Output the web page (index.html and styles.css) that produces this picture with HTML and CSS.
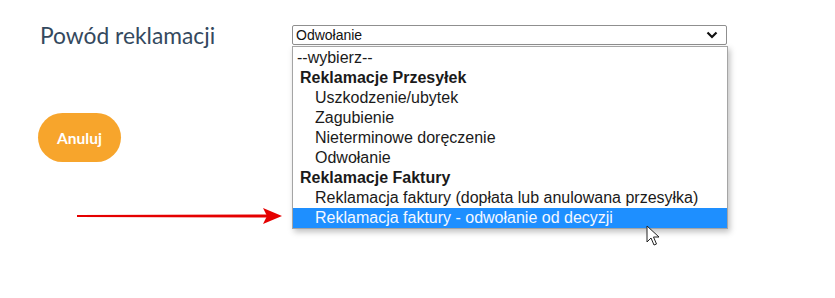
FILE: index.html
```html
<!DOCTYPE html>
<html lang="pl">
<head>
    <meta charset="UTF-8">
    <title>Powód reklamacji</title>
    <link rel="stylesheet" href="styles.css">
</head>
<body>
    <div class="page">
        <div class="form-row">
            <label class="label">Powód reklamacji</label>
            <div class="select-wrap">
                <div class="select">
                    <span>Odwołanie</span>
                    <svg class="chevron" width="12" height="8" viewBox="0 0 12 8">
                        <path d="M1.5 1.5 L6 6 L10.5 1.5" fill="none" stroke="#111" stroke-width="2.2"/>
                    </svg>
                </div>
                <ul class="dropdown">
                    <li class="opt top">--wybierz--</li>
                    <li class="group">Reklamacje Przesyłek</li>
                    <li class="opt">Uszkodzenie/ubytek</li>
                    <li class="opt">Zagubienie</li>
                    <li class="opt">Nieterminowe doręczenie</li>
                    <li class="opt">Odwołanie</li>
                    <li class="group">Reklamacje Faktury</li>
                    <li class="opt">Reklamacja faktury (dopłata lub anulowana przesyłka)</li>
                    <li class="opt active">Reklamacja faktury - odwołanie od decyzji</li>
                </ul>
            </div>
        </div>

        <div class="actions">
            <button class="btn">Anuluj</button>
            <button class="btn">Dalej</button>
        </div>
    </div>

    <svg class="arrow" width="210" height="18" viewBox="0 0 210 18">
        <path d="M0 8 L190 7.5 L190 10.5 L0 10 Z" fill="#e50000"/>
        <path d="M186 1 L205 9 L186 17 L190 9 Z" fill="#e50000"/>
    </svg>

    <svg class="cursor" width="16" height="22" viewBox="0 0 16 22">
        <path d="M1 1 L1 17 L5 13 L8 20 L10.5 19 L7.5 12 L13 12 Z" fill="#fff" stroke="#222" stroke-width="1"/>
    </svg>
</body>
</html>
```

FILE: styles.css
```css
html, body {
    margin: 0;
    height: 100%;
    background: #fff;
    font-family: "Liberation Sans", Arial, sans-serif;
}

.page {
    min-height: 100%;
    box-sizing: border-box;
    padding: 25px 0 0 38px;
}

.form-row {
    display: flex;
    align-items: center;
    height: 20px;
}

.label {
    width: 254px;
    padding-left: 2px;
    box-sizing: border-box;
    font-family: Lato, sans-serif;
    font-size: 22.8px;
    color: #34495e;
}

.select-wrap {
    position: relative;
    width: 435px;
}

.select {
    display: flex;
    align-items: center;
    justify-content: space-between;
    height: 20px;
    box-sizing: border-box;
    padding: 0 8px 0 3px;
    border: 1px solid #8f8f8f;
    border-radius: 2px;
    font-size: 14px;
    color: #111;
}

.dropdown {
    position: absolute;
    top: 21px;
    left: 0;
    z-index: 5;
    width: 434px;
    margin: 0;
    padding: 1px 0 0;
    list-style: none;
    background: #fff;
    border: 1px solid #a5a5a5;
    box-shadow: 2px 3px 6px rgba(0, 0, 0, 0.25);
    font-size: 16px;
    color: #1a1a1a;
}

.dropdown li {
    height: 20px;
    line-height: 20px;
    white-space: nowrap;
}

.opt {
    padding-left: 22px;
}

.opt.top {
    padding-left: 4px;
}

.group {
    padding-left: 7px;
    font-weight: bold;
}

.active {
    background: #1e8fff;
    color: #f4f8ff;
}

.actions {
    display: flex;
    justify-content: space-between;
    width: 690px;
    margin-top: 68px;
}

.btn {
    width: 83px;
    height: 49px;
    border: none;
    border-radius: 25px;
    background: #f7a52c;
    color: #fff;
    font-family: Lato, sans-serif;
    font-weight: bold;
    font-size: 15.5px;
}

.arrow {
    position: absolute;
    left: 77px;
    top: 207px;
}

.cursor {
    position: absolute;
    left: 646px;
    top: 225px;
    z-index: 6;
}
```
